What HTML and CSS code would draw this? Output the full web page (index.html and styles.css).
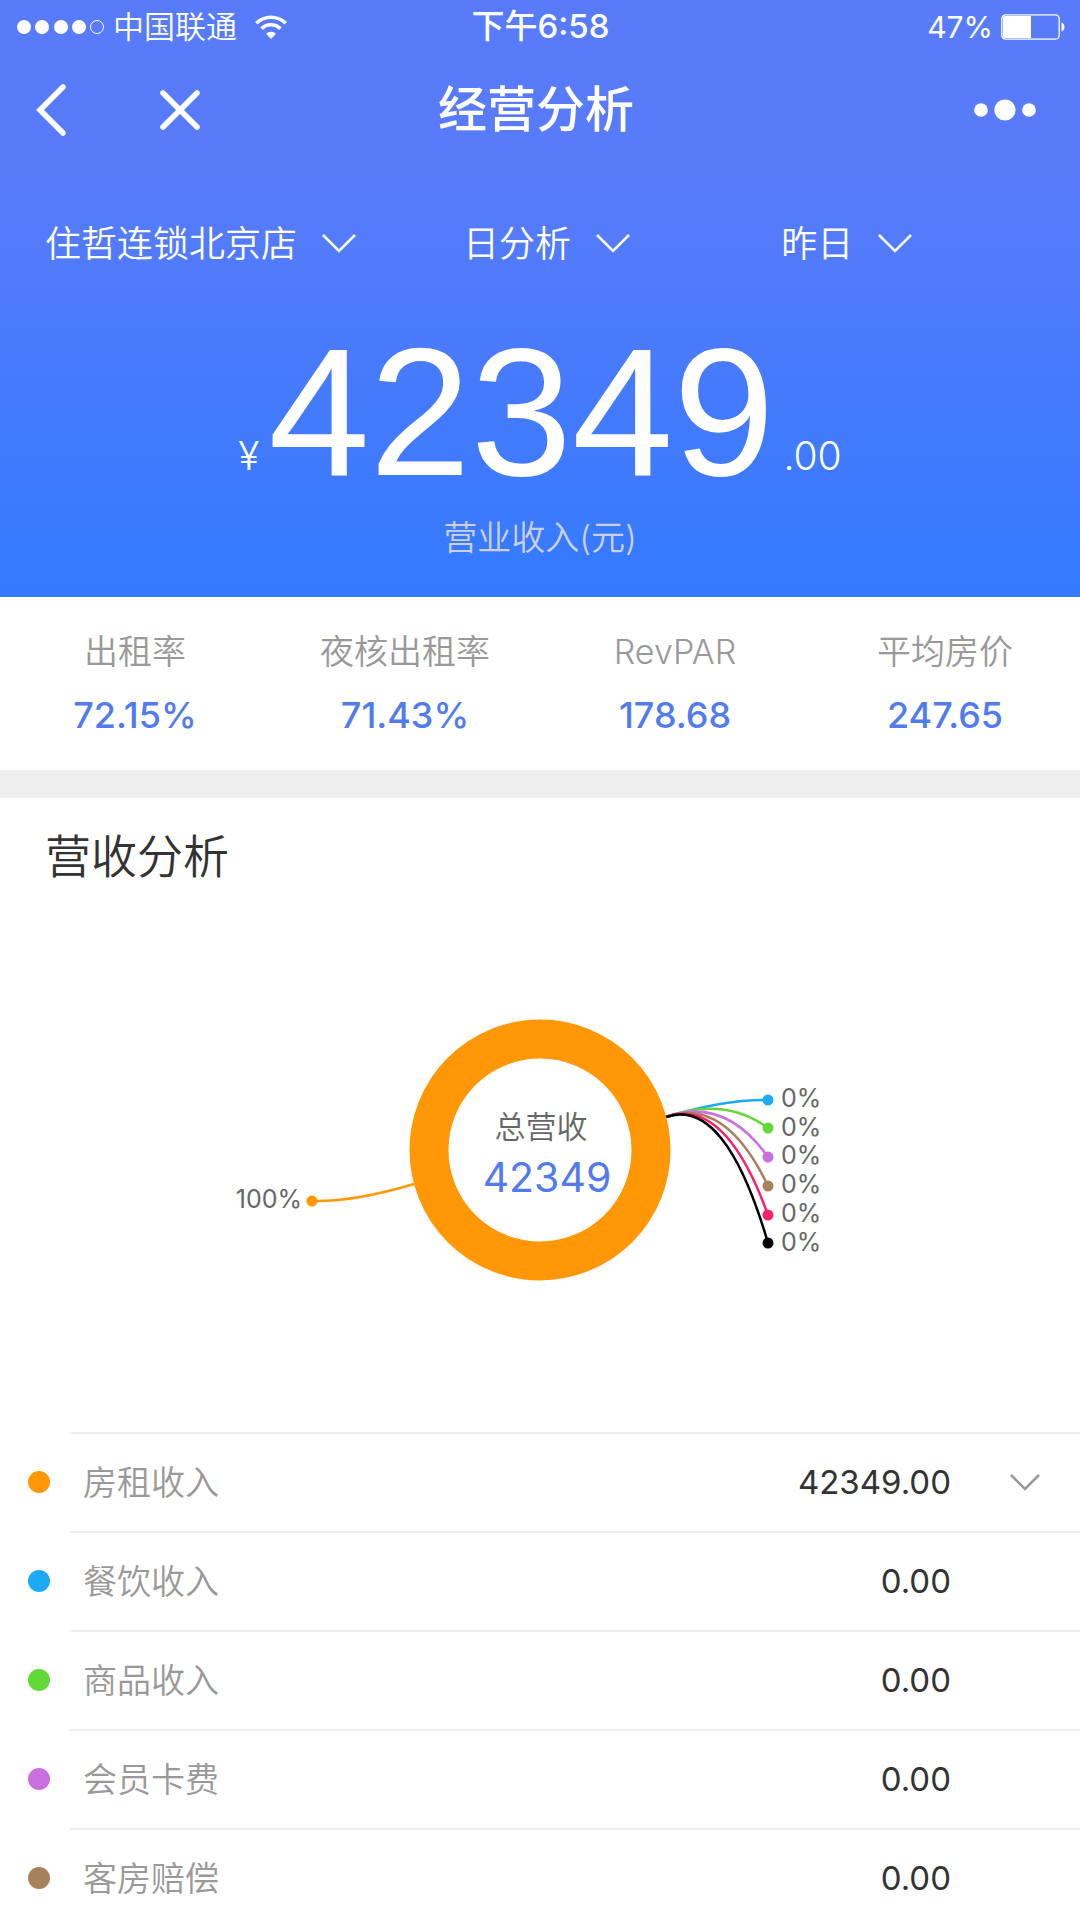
FILE: index.html
```html
<!DOCTYPE html>
<html lang="zh-CN">
<head>
<meta charset="UTF-8">
<meta name="viewport" content="width=device-width, initial-scale=1">
<title>经营分析</title>
<link rel="stylesheet" href="styles.css">
</head>

<body>
<header class="header">
	<div class="status">
		<div class="status-left">
			<svg class="signal" width="88" height="16" viewBox="0 0 88 16" aria-hidden="true">
				<g fill="#fff">
					<circle cx="8" cy="8" r="7"/>
					<circle cx="26" cy="8" r="7"/>
					<circle cx="45" cy="8" r="7"/>
					<circle cx="63" cy="8" r="7"/>
				</g>
				<circle cx="81" cy="8" r="6.5" fill="none" stroke="#fff"/>
			</svg>
			<span class="carrier">中国联通</span>
			<svg width="32" height="24" viewBox="0 0 32 24" fill="none" stroke="#fff" stroke-width="3.6" aria-hidden="true">
				<path d="M1.3 8.3a21 21 0 0 1 29.4 0"/>
				<path d="M6.6 13.6a13.4 13.4 0 0 1 18.8 0"/>
				<path d="M16 24l-5-5.2a7 7 0 0 1 10 0z" fill="#fff" stroke="none"/>
			</svg>
		</div>
		<span class="time">下午6:58</span>
		<div class="status-right">
			<span class="battery">47%</span>
			<svg width="64" height="26" viewBox="0 0 64 26" aria-hidden="true">
				<rect x="0.8" y="0.8" width="57.4" height="24.4" rx="4" fill="none" stroke="#fff" stroke-width="1.3"/>
				<path d="M4 2h26v22H4a2 2 0 0 1-2-2V4a2 2 0 0 1 2-2z" fill="#fff"/>
				<path d="M60.500 8.500c4 1 4 8 0 9z" fill="#fff"/>
			</svg>
		</div>
	</div>

	<nav class="nav">
		<div class="nav-left">
			<button type="button" class="icon-btn" aria-label="返回">
				<svg width="32" height="52" viewBox="0 0 32 52" fill="none" stroke="#fff" stroke-width="5.500" stroke-linecap="round"><path d="M27 3L4 26l23 23"/></svg>
			</button>
			<button type="button" class="icon-btn" aria-label="关闭">
				<svg width="40" height="40" viewBox="0 0 40 40" fill="none" stroke="#fff" stroke-width="5.500" stroke-linecap="round"><path d="M3 3l34 34M37 3L3 37"/></svg>
			</button>
		</div>
		<h1 class="title">经营分析</h1>
		<div class="nav-right">
			<button type="button" class="icon-btn" aria-label="更多">
				<svg width="62" height="22" viewBox="0 0 62 22" fill="#fff"><circle cx="7" cy="11" r="6.800"/><circle cx="31" cy="11" r="10.600"/><circle cx="55" cy="11" r="6.800"/></svg>
			</button>
		</div>
	</nav>

	<form class="filters">
		<label class="picker">
			<select name="hotel" aria-label="门店"><option>住哲连锁北京店</option></select>
			<svg width="34" height="20" viewBox="0 0 34 20"><path d="M1 1l16 16L33 1"/></svg>
		</label>
		<label class="picker">
			<select name="type" aria-label="分析方式"><option>日分析</option></select>
			<svg width="34" height="20" viewBox="0 0 34 20"><path d="M1 1l16 16L33 1"/></svg>
		</label>
		<label class="picker">
			<select name="date" aria-label="日期"><option>昨日</option></select>
			<svg width="34" height="20" viewBox="0 0 34 20"><path d="M1 1l16 16L33 1"/></svg>
		</label>
	</form>

	<div class="total">
		<span class="small">¥</span><span class="big">42349</span><span class="small">.00</span>
	</div>
	<p class="total-label">营业收入(元)</p>
</header>

<dl class="stats">
	<div><dt>出租率</dt><dd>72.15%</dd></div>
	<div><dt>夜核出租率</dt><dd>71.43%</dd></div>
	<div><dt>RevPAR</dt><dd>178.68</dd></div>
	<div><dt>平均房价</dt><dd>247.65</dd></div>
</dl>

<main class="revenue">
	<h2 class="subtitle">营收分析</h2>

	<svg class="chart" viewBox="0 0 1080 501" role="img" aria-label="总营收 42349">
		<!-- 引导线 -->
		<g class="lines">
			<path d="M414 253Q354 271 312 270" stroke="#ff9706"/>
			<path d="M666 186Q725 168 768 169" stroke="#1daaf5"/>
			<path d="M666 186Q725 165 768 197" stroke="#63d937"/>
			<path d="M666 186Q725 165 768 226" stroke="#ca70e0"/>
			<path d="M666 186Q725 165 768 255" stroke="#a5825b"/>
			<path d="M666 186Q725 165 768 284" stroke="#fb2069"/>
			<path d="M666 186Q725 165 768 312" stroke="#000"/>
		</g>
		<circle cx="312" cy="270" r="5.500" fill="#ff9706"/>
		<circle cx="768" cy="169" r="5.500" fill="#1daaf5"/>
		<circle cx="768" cy="197" r="5.500" fill="#63d937"/>
		<circle cx="768" cy="226" r="5.500" fill="#ca70e0"/>
		<circle cx="768" cy="255" r="5.500" fill="#a5825b"/>
		<circle cx="768" cy="284" r="5.500" fill="#fb2069"/>
		<circle cx="768" cy="312" r="5.500" fill="#000"/>
		<!-- 圆环 -->
		<circle cx="540" cy="219" r="111" fill="none" stroke="#ff9706" stroke-width="39"/>
		<g class="percent">
			<text x="302" y="277" text-anchor="end">100%</text>
			<text x="781" y="176">0%</text>
			<text x="781" y="205">0%</text>
			<text x="781" y="233">0%</text>
			<text x="781" y="262">0%</text>
			<text x="781" y="291">0%</text>
			<text x="781" y="320">0%</text>
		</g>
		<text class="chart-name" x="541" y="207" text-anchor="middle">总营收</text>
		<text class="chart-value" x="547" y="261" text-anchor="middle">42349</text>
	</svg>

	<ul class="list">
		<li class="row orange">
			<div class="cell">
				<span class="name">房租收入</span><span class="amount">42349.00</span>
				<button type="button" class="icon-btn more" aria-label="展开">
					<svg width="30" height="18" viewBox="0 0 30 18"><path d="M1 1l14 14L29 1"/></svg>
				</button>
			</div>
		</li>
		<li class="row blue"><div class="cell"><span class="name">餐饮收入</span><span class="amount">0.00</span></div></li>
		<li class="row green"><div class="cell"><span class="name">商品收入</span><span class="amount">0.00</span></div></li>
		<li class="row purple"><div class="cell"><span class="name">会员卡费</span><span class="amount">0.00</span></div></li>
		<li class="row brown"><div class="cell"><span class="name">客房赔偿</span><span class="amount">0.00</span></div></li>
	</ul>
</main>
</body>
</html>
```

FILE: styles.css
```css
* { padding: 0; margin: 0; box-sizing: border-box; }
html, body { height: 100%; overflow: hidden; }
body { font-family: Inter, "Noto Sans CJK SC", sans-serif; font-size: 34px; font-weight: 350; line-height: 1.5; color: #333; background-color: #fff; }
svg { display: block; flex: none; }
ul { list-style: none; }
.icon-btn { border: 0; background: none; cursor: pointer; }

/* 顶部 */
.header { padding-bottom: 29px; color: #fff; background: linear-gradient(#587bfa 0%, #587bfa 30%, #337aff 100%); }
.status { display: grid; grid-template-columns: 1fr auto 1fr; align-items: center; height: 54px; padding: 0 15px 0 16px; font-size: 31px; }
.status-left, .status-right { display: flex; align-items: center; }
.status-right { justify-content: flex-end; gap: 8px; }
.carrier { margin: 0 18px 0 9px; }
.time { font-size: 33px; font-weight: 500; }
.battery { font-size: 30px; font-weight: 400; }

.nav { display: grid; grid-template-columns: 1fr auto 1fr; align-items: center; height: 112px; padding: 0 44px 0 36px; }
.nav-left { display: flex; align-items: center; gap: 92px; }
.nav-right { display: flex; justify-content: flex-end; }
.title { font-size: 49px; font-weight: 500; }

.filters { display: grid; grid-template-columns: 42% 32% 1fr; align-items: center; height: 156px; padding: 0 40px 0 45px; }
.picker { display: flex; align-items: center; gap: 24px; }
.picker select { appearance: none; border: 0; background: none; color: #fff; font: inherit; font-size: 36px; }
.picker option { color: #333; }
.picker path { fill: none; stroke: #fff; stroke-width: 2.5; }

.total { display: flex; justify-content: center; align-items: flex-end; gap: 9px; margin-top: 10px; }
.big { font-family: "Liberation Sans", Arial, sans-serif; font-size: 182px; line-height: 160px; }
.small { padding-bottom: 12px; font-size: 39px; line-height: 48px; }
.total-label { margin-top: 16px; text-align: center; line-height: 60px; color: #ccd0dc; }

/* 指标 */
.stats { display: grid; grid-template-columns: repeat(4, 1fr); padding: 23px 0; border-bottom: 28px solid #efefef; text-align: center; }
.stats dt { line-height: 63px; color: #999; }
.stats dd { line-height: 64px; font-size: 36px; font-weight: 550; color: #527bf0; }

/* 营收分析 */
.subtitle { padding-left: 45px; line-height: 116px; font-size: 46px; font-weight: 350; }
.chart { width: 100%; margin-top: 17px; }
.lines path { fill: none; stroke-width: 2.5; }
.percent { font-size: 25px; font-weight: 400; fill: #666; }
.chart-name { font-size: 31px; fill: #666; }
.chart-value { font-size: 41px; font-weight: 400; fill: #527bf0; }

.row { display: flex; align-items: center; padding-left: 28px; }
.row::before { content: ""; width: 22px; height: 22px; border-radius: 50%; background-color: currentColor; }
.cell { flex: 1; display: flex; align-items: center; height: 99px; margin-left: 20px; padding: 0 129px 0 13px; border-top: 2px solid #efefef; position: relative; }
.name { color: #999; }
.amount { margin-left: auto; font-size: 33px; font-weight: 400; color: #333; }
.more { position: absolute; right: 40px; }
.more path { fill: none; stroke: #999; stroke-width: 2.5; }
.orange { color: #ff9706; }
.blue { color: #1daaf5; }
.green { color: #63d937; }
.purple { color: #ca70e0; }
.brown { color: #a5825b; }
```
